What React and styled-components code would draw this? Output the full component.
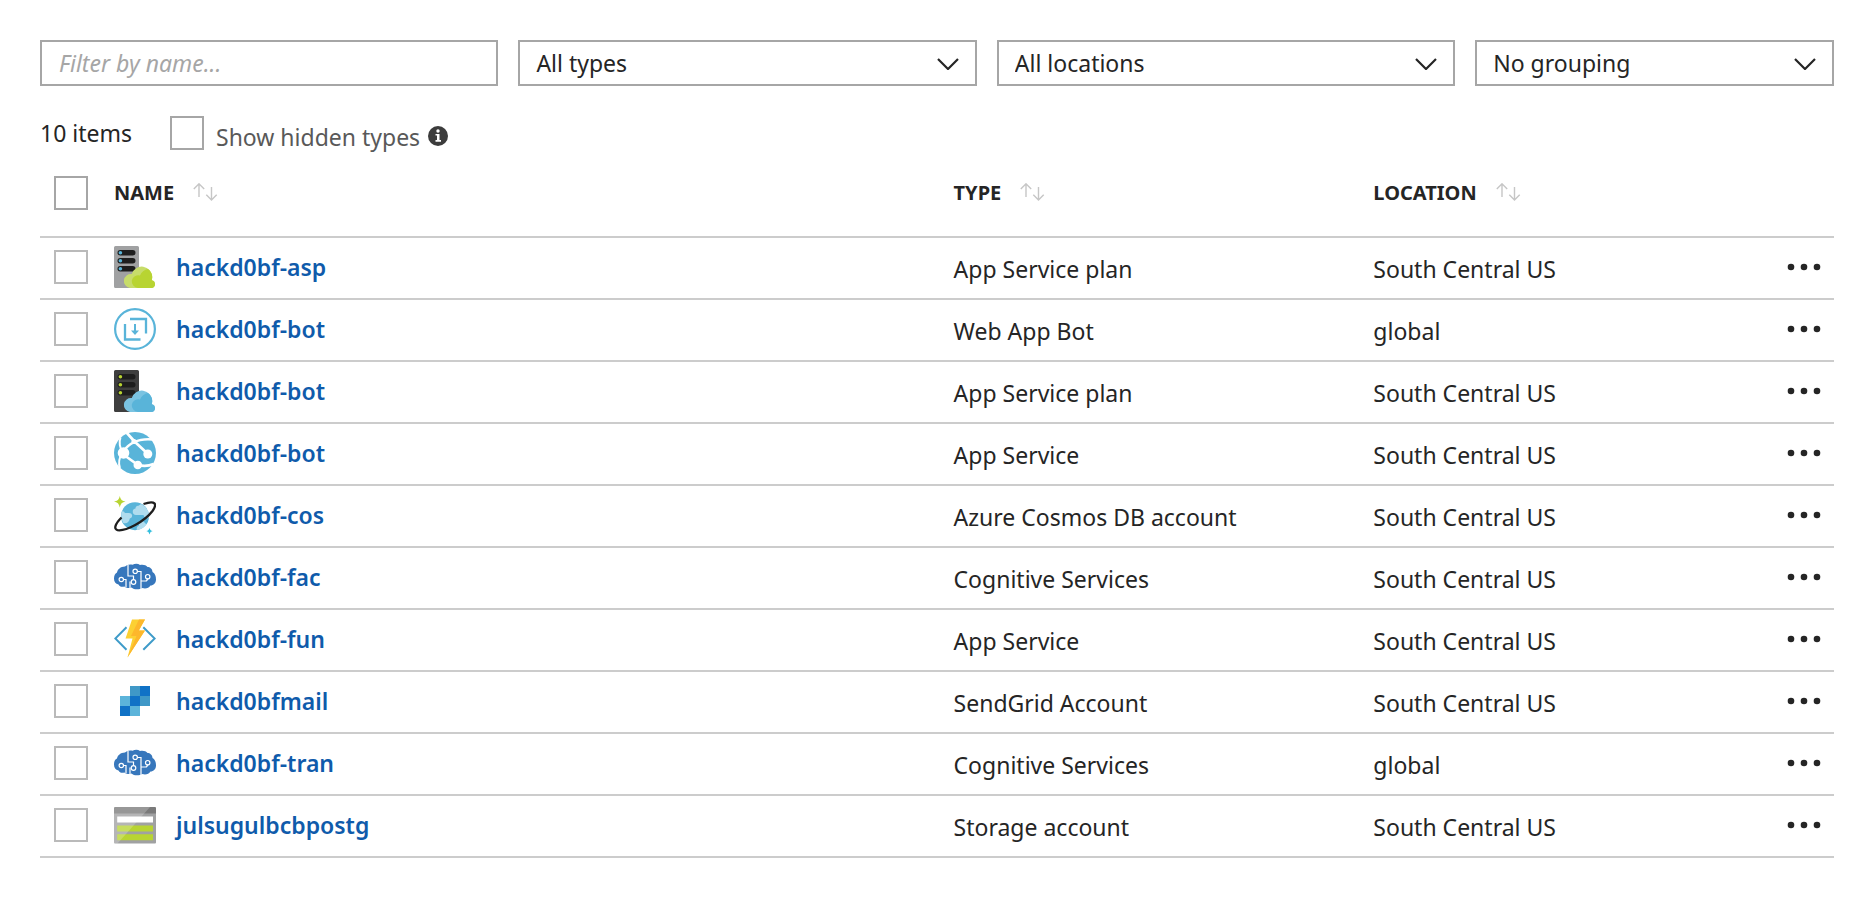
import React from "react";
import styled, { createGlobalStyle } from "styled-components";

const ink = "#252525";
const line = "#cccccc";
const control = "#a6a6a6";

const GlobalStyle = createGlobalStyle`
  *, *::before, *::after { box-sizing: border-box; }
  body {
    margin: 0;
    background: #fff;
    color: ${ink};
    font-family: "Noto Sans", "Open Sans", sans-serif;
    font-size: 23px;
    line-height: 34px;
  }
  input, select, button { font: inherit; color: inherit; }
`;

const Page = styled.main`
  padding: 40px;
`;

const Filters = styled.form`
  display: grid;
  grid-template-columns: 1fr 1fr 1fr 20%;
  gap: 20px;
`;

const FilterInput = styled.input`
  width: 100%;
  height: 46px;
  padding: 0 17px;
  border: 2px solid ${control};
  border-radius: 0;
  background: #fff;
  &::placeholder {
    color: #a6a6a6;
    font-style: italic;
    opacity: 1;
  }
`;

const SelectBox = styled.div`
  display: grid;
  align-items: center;
  & > * { grid-area: 1 / 1; }
  & > svg {
    justify-self: end;
    margin-right: 18px;
    pointer-events: none;
  }
`;

const Select = styled.select`
  appearance: none;
  width: 100%;
  height: 46px;
  padding: 0 48px 0 16px;
  border: 2px solid ${control};
  border-radius: 0;
  background: #fff;
`;

const Summary = styled.div`
  display: flex;
  align-items: center;
  gap: 36px;
  margin: 30px 0 16px;
`;

const Count = styled.span`
  min-width: 94px;
`;

const HiddenToggle = styled.div`
  display: flex;
  align-items: center;
  gap: 8px;
`;

const ToggleLabel = styled.label`
  height: 34px;
  padding: 4px 0 0 4px;
  color: #595959;
`;

const InfoButton = styled.button`
  display: flex;
  padding: 6px 0 0;
  border: 0;
  background: none;
`;

const Checkbox = styled.input`
  appearance: none;
  display: block;
  flex: none;
  width: 34px;
  height: 34px;
  margin: 0;
  border: 2px solid ${(p) => (p.$soft ? "#bababa" : control)};
  background: #fff;
  &:checked { background: #0058ad; }
`;

const Table = styled.table`
  width: 100%;
  table-layout: fixed;
  border-collapse: separate;
  border-spacing: 0;
`;

const Column = styled.col`
  width: ${(p) => p.$width};
`;

const HeadCell = styled.th`
  padding: 10px 0 26px ${(p) => (p.$inset ? "14px" : "0")};
  border-bottom: 2px solid ${line};
  text-align: left;
  vertical-align: top;
  font-size: 20px;
  font-weight: 700;
`;

const SortButton = styled.button`
  display: flex;
  align-items: center;
  gap: 18px;
  padding: 0;
  border: 0;
  background: none;
`;

const Cell = styled.td`
  height: 62px;
  padding: 0 0 2px ${(p) => (p.$inset ? "14px" : "0")};
  border-bottom: 2px solid ${line};
  vertical-align: middle;
`;

const TextCell = styled(Cell)`
  padding-top: 2px;
  padding-bottom: 0;
`;

const NameGroup = styled.div`
  display: flex;
  align-items: center;
  gap: 20px;
`;

const NameLink = styled.a`
  color: #0f5bab;
  font-weight: 600;
  text-decoration: none;
`;

const MenuButton = styled.button`
  display: flex;
  margin-left: auto;
  padding: 12px 13px 12px 0;
  border: 0;
  background: none;
`;

const Icon = ({ children }) => (
  <svg width="42" height="42" viewBox="0 0 42 42" aria-hidden="true">{children}</svg>
);

const Chevron = () => (
  <svg width="22" height="14" viewBox="0 0 22 14" fill="none" stroke={ink} strokeWidth="2.2" aria-hidden="true">
    <path d="M1 3l10 10L21 3" />
  </svg>
);

const SortArrows = () => (
  <svg width="26" height="20" viewBox="0 0 26 20" fill="none" stroke="#c6c6c6" strokeWidth="1.400" aria-hidden="true">
    <path d="M7 14V0.800M1.800 6L7 0.800L12.200 6M19.500 4v13M14.300 11.800L19.500 17l5.200-5.200" />
  </svg>
);

const InfoIcon = () => (
  <svg width="20" height="20" viewBox="0 0 20 20" aria-hidden="true">
    <circle cx="10" cy="10" r="10" fill="#3c3c3c" />
    <circle cx="10" cy="5" r="1.700" fill="#fff" />
    <path d="M7.500 8h4v6h1.500v1.700h-5.500V14H9V9.600H7.500z" fill="#fff" />
  </svg>
);

const Dots = () => (
  <svg width="34" height="8" viewBox="0 0 34 8" fill={ink} aria-hidden="true">
    <circle cx="4" cy="4" r="3.300" />
    <circle cx="17" cy="4" r="3.300" />
    <circle cx="30" cy="4" r="3.300" />
  </svg>
);

const PlanIcon = ({ body, slot, led, cloud, shade }) => (
  <Icon>
    <path d="M1.500 0h22a1.500 1.500 0 0 1 1.500 1.500V42H1.500A1.500 1.500 0 0 1 0 40.500v-39A1.500 1.500 0 0 1 1.500 0z" fill={body} />
    {[4, 12, 20].map((y) => (
      <g key={y}>
        <rect x="3.500" y={y} width="18" height="5.400" rx="2.700" fill={slot} />
        <circle cx="6.400" cy={y + 2.700} r="1.800" fill={led} />
      </g>
    ))}
    <path d="M16 42a7 7 0 1 1 1.800-13.900A10.400 10.400 0 0 1 38.200 31c0 1.200-.1 2.200-.4 3.200A4 4 0 0 1 38 42z" fill={shade} />
    <path d="M24 42a6.700 6.700 0 0 1-6.200-7.500 6.700 6.700 0 0 1 8.200-5c1.500-3.500 4.300-5.700 8-6.500a10.400 10.400 0 0 1 3.800 11.200A4 4 0 0 1 38 42z" fill={cloud} />
  </Icon>
);

const AppPlanIcon = () => <PlanIcon body="#a0a1a2" slot="#1e1e1e" led="#59b4d9" cloud="#b8d432" shade="#c7dc6a" />;
const BotPlanIcon = () => <PlanIcon body="#3e3e3e" slot="#1e1e1e" led="#b8d432" cloud="#59b4d9" shade="#7ac3e1" />;

const BotIcon = () => (
  <Icon>
    <g fill="none" stroke="#59b4d9">
      <circle cx="21" cy="21" r="19.900" strokeWidth="2.200" />
      <path d="M16 11h16v14.500M11 16v15.500h15.500" strokeWidth="2.300" />
      <path d="M21 16v8" strokeWidth="2" />
    </g>
    <path d="M17 22.500l4 4.500 4-4.500z" fill="#59b4d9" />
  </Icon>
);

const AppServiceIcon = () => (
  <Icon>
    <circle cx="21" cy="21" r="21" fill="#59b4d9" />
    <g fill="none" stroke="#fff">
      <path d="M12.500 0.500L20.500 9.500L34 22" strokeWidth="2.700" />
      <path d="M9 20C14 12 24 6 39 7.500" strokeWidth="2.700" />
      <path d="M6.500 5.500C5 10 5.500 15 8.500 20C5 26 4 31 6 36" strokeWidth="2" />
      <path d="M10 23L24 33C30 34.500 35 34 39.500 32" strokeWidth="2.700" />
    </g>
    <g fill="#fff">
      <circle cx="9.500" cy="21" r="5.800" />
      <circle cx="20" cy="9.500" r="2.600" />
      <circle cx="33.800" cy="22" r="4.500" />
      <circle cx="23.800" cy="33" r="4.300" />
    </g>
  </Icon>
);

const CosmosIcon = () => (
  <Icon>
    <circle cx="21" cy="22.200" r="14" fill="#59b4d9" />
    <path d="M27 10a14 14 0 0 1 8 13.500c-2 2-4.500.8-5.500-2.500H22c-4 0-4.500-6-.5-6.500 0-2 1.500-3 3-2.700zM8 17.500c1-.8 2.500 0 2.800 1.500h4c4 0 4.500 4.500 1 5.500-.5 4-3.500 5.500-6.500 4.500A14 14 0 0 1 8 17.500zM25 28.500c1.500-2 4-2 5-.5l2.500 2.500a14 14 0 0 1-9.500 5.500c-1-2 .5-4 2-4.500z" fill="#b0dcee" />
    <path d="M7.500 23.500C1 30 -.5 35 3.500 36.200C12 37.500 30.500 27.500 38.500 17C43.500 10 41.500 6 29.500 10" fill="none" stroke="#1e1e1e" strokeWidth="2.300" />
    <path d="M5.800 2Q6.500 7 11.500 7.500Q6.500 8.200 5.800 13.500Q5 8.200 0 7.500Q5 7 5.800 2z" fill="#b8d432" />
    <path d="M35.500 33.800Q36 36.800 38.700 37.100Q36 37.500 35.500 40.500Q35 37.500 32.300 37.100Q35 36.800 35.500 33.800z" fill="#32bedd" />
  </Icon>
);

const BrainIcon = () => (
  <Icon>
    <path d="M11 10.500C13 8.500 16 8 18.500 8.800C21 7.500 24 7.500 26 9C29 8.200 32 9 33.500 11C36 11 38.500 13 38.500 16C41 17.500 42 20 42 23.500C42 27 39.500 29.500 36.500 29.500C35 32 31.500 33 28.500 32C25.500 33.800 20 34 17.500 31.500C15 32.500 12 32 10.500 30.500C7.500 31.300 5.500 30.500 4.500 28.500C1.500 28 0 25.500 0 22.500C0 19.500 1 17.500 3 16.500C3.500 13.500 6.500 10.500 11 10.500z" fill="#3777bc" />
    <g fill="none" stroke="#fff" strokeWidth="1.200">
      <path d="M14 9v11h5.500v3.500M23.500 15.500H27V33M9.500 23.500H12V31M27 25h4.500c1.500 0 2-1 2-2.500M16 25.500V32" />
      <circle cx="7.300" cy="23.500" r="2.200" />
      <circle cx="19.500" cy="26" r="2.300" />
      <circle cx="21.200" cy="15.300" r="2.200" />
      <circle cx="33.700" cy="20.700" r="2.200" />
    </g>
  </Icon>
);

const FunctionIcon = () => (
  <Icon>
    <path d="M12.500 9.300L1.300 20.500L12.500 31.800M29.300 9.300L40.700 20.500L29.300 31.800" fill="none" stroke="#3e9bc9" strokeWidth="2" />
    <path d="M18 1.500H31L24.800 12.500H31L13.500 39.500L18.500 20.500H11.500z" fill="#fcd033" />
    <path d="M31 1.500L24.800 12.500H31L13.500 39.500L22.500 18H17L25 1.500z" fill="#fdb72c" />
  </Icon>
);

const MailIcon = () => (
  <Icon>
    <path d="M16 6h10v10H16zM26 16h10v10H26z" fill="#3f98c7" />
    <path d="M26 6h10v10H26zM16 16h10v10H16zM6 26h10v10H6z" fill="#1072c6" />
    <path d="M6 16h10v10H6zM16 26h10v10H16z" fill="#5cb4da" />
  </Icon>
);

const StorageIcon = () => (
  <Icon>
    <path d="M0 9h42v29.500a1 1 0 0 1-1 1H1a1 1 0 0 1-1-1z" fill="#a0a1a2" />
    <path d="M1 3h40a1 1 0 0 1 1 1v5.500H0V4a1 1 0 0 1 1-1z" fill="#7a7a7a" />
    <path d="M3.200 12.500h35.800v6H3.200z" fill="#fff" />
    <path d="M3.200 21.500h35.800v6H3.200zM3.200 30.300h35.800v6H3.200z" fill="#b8d432" />
    <path d="M0 3h36L3.500 39.500H0z" fill="#fff" opacity=".22" />
  </Icon>
);

const resources = [
  { name: "hackd0bf-asp", icon: AppPlanIcon, type: "App Service plan", location: "South Central US" },
  { name: "hackd0bf-bot", icon: BotIcon, type: "Web App Bot", location: "global" },
  { name: "hackd0bf-bot", icon: BotPlanIcon, type: "App Service plan", location: "South Central US" },
  { name: "hackd0bf-bot", icon: AppServiceIcon, type: "App Service", location: "South Central US" },
  { name: "hackd0bf-cos", icon: CosmosIcon, type: "Azure Cosmos DB account", location: "South Central US" },
  { name: "hackd0bf-fac", icon: BrainIcon, type: "Cognitive Services", location: "South Central US" },
  { name: "hackd0bf-fun", icon: FunctionIcon, type: "App Service", location: "South Central US" },
  { name: "hackd0bfmail", icon: MailIcon, type: "SendGrid Account", location: "South Central US" },
  { name: "hackd0bf-tran", icon: BrainIcon, type: "Cognitive Services", location: "global" },
  { name: "julsugulbcbpostg", icon: StorageIcon, type: "Storage account", location: "South Central US" },
];

const FilterSelect = ({ label, option }) => (
  <SelectBox>
    <Select aria-label={label}>
      <option>{option}</option>
    </Select>
    <Chevron />
  </SelectBox>
);

const SortHeader = ({ children }) => (
  <HeadCell scope="col">
    <SortButton type="button">
      {children}
      <SortArrows />
    </SortButton>
  </HeadCell>
);

const ResourceRow = ({ name, icon: ResourceIcon, type, location }) => (
  <tr>
    <Cell $inset>
      <Checkbox type="checkbox" $soft aria-label={`Select ${name}`} />
    </Cell>
    <Cell>
      <NameGroup>
        <ResourceIcon />
        <NameLink href="#">{name}</NameLink>
      </NameGroup>
    </Cell>
    <TextCell>{type}</TextCell>
    <TextCell>{location}</TextCell>
    <Cell>
      <MenuButton type="button" aria-label={`More actions for ${name}`}>
        <Dots />
      </MenuButton>
    </Cell>
  </tr>
);

export default function App() {
  return (
    <>
      <GlobalStyle />
      <Page>
        <Filters>
          <FilterInput type="text" placeholder="Filter by name..." aria-label="Filter by name" />
          <FilterSelect label="Types" option="All types" />
          <FilterSelect label="Locations" option="All locations" />
          <FilterSelect label="Grouping" option="No grouping" />
        </Filters>
        <Summary>
          <Count>10 items</Count>
          <HiddenToggle>
            <Checkbox type="checkbox" id="show-hidden" />
            <ToggleLabel htmlFor="show-hidden">Show hidden types</ToggleLabel>
            <InfoButton type="button" aria-label="About hidden types">
              <InfoIcon />
            </InfoButton>
          </HiddenToggle>
        </Summary>
        <Table>
          <colgroup>
            <Column $width="74px" />
            <Column $width="46.8%" />
            <Column $width="23.4%" />
            <Column $width="auto" />
            <Column $width="60px" />
          </colgroup>
          <thead>
            <tr>
              <HeadCell $inset>
                <Checkbox type="checkbox" aria-label="Select all" />
              </HeadCell>
              <SortHeader>NAME</SortHeader>
              <SortHeader>TYPE</SortHeader>
              <SortHeader>LOCATION</SortHeader>
              <HeadCell />
            </tr>
          </thead>
          <tbody>
            {resources.map((resource, i) => (
              <ResourceRow key={i} {...resource} />
            ))}
          </tbody>
        </Table>
      </Page>
    </>
  );
}
